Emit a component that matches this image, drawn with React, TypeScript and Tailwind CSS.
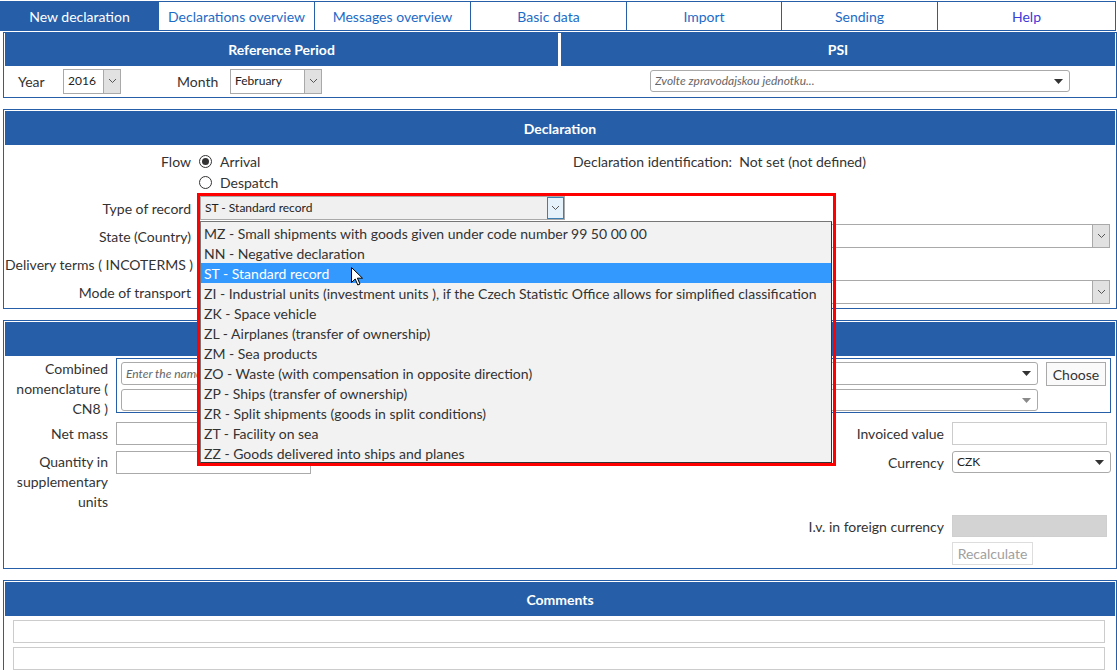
import type { ReactNode } from 'react'

const typeOptions = [
  'MZ - Small shipments with goods given under code number 99 50 00 00',
  'NN - Negative declaration',
  'ST - Standard record',
  'ZI - Industrial units (investment units ), if the Czech Statistic Office allows for simplified classification',
  'ZK - Space vehicle',
  'ZL - Airplanes (transfer of ownership)',
  'ZM - Sea products',
  'ZO - Waste (with compensation in opposite direction)',
  'ZP - Ships (transfer of ownership)',
  'ZR - Split shipments (goods in split conditions)',
  'ZT - Facility on sea',
  'ZZ - Goods delivered into ships and planes',
]

function Chevron() {
  return (
    <svg width="9" height="6" viewBox="0 0 9 6">
      <path d="M1 1l3.5 3.5L8 1" fill="none" stroke="#555" strokeWidth="1" />
    </svg>
  )
}

function Caret({ light }: { light?: boolean }) {
  return (
    <svg width="9" height="5" viewBox="0 0 9 5">
      <path d="M0 0h9L4.5 5z" fill={light ? '#8a8a8a' : '#333'} />
    </svg>
  )
}

// old-style native select with a grey button on the right
function ClassicSelect({ value, className }: { value?: string; className: string }) {
  return (
    <div className={`flex border border-[#a9a9a9] bg-white ${className}`}>
      <span className="flex flex-1 items-center truncate px-[4px] text-[12px] text-[#222]">{value}</span>
      <span className="flex w-[17px] items-center justify-center border-l border-[#a9a9a9] bg-[#e1e1e1]">
        <Chevron />
      </span>
    </div>
  )
}

// rounded combobox with a small black triangle
function Combo({ placeholder, value, className, light, clip }: { placeholder?: string; value?: string; className: string; light?: boolean; clip?: boolean }) {
  return (
    <div className={`flex items-center rounded-[3px] border border-[#aaaaaa] bg-white pl-[4px] pr-[6px] ${className}`}>
      {placeholder ? (
        <span className={`overflow-hidden whitespace-nowrap text-[12px] italic text-[#666] ${clip ? 'w-[74px]' : ''}`}>{placeholder}</span>
      ) : (
        <span className="text-[12px] text-[#222]">{value}</span>
      )}
      <span className="flex-1" />
      <Caret light={light} />
    </div>
  )
}

function Header({ children, className = '' }: { children?: ReactNode; className?: string }) {
  return (
    <div className={`flex items-center justify-center bg-[#265fa8] text-[14px] font-bold text-white ${className}`}>
      {children}
    </div>
  )
}

function Radio({ checked }: { checked?: boolean }) {
  return (
    <span className="flex h-[13px] w-[13px] items-center justify-center rounded-full border border-[#333] bg-white">
      {checked ? <span className="h-[7px] w-[7px] rounded-full bg-[#333]" /> : null}
    </span>
  )
}

function Cursor() {
  return (
    <svg width="13" height="20" viewBox="0 0 13 20" className="absolute left-[351px] top-[267px]">
      <path d="M0.5 0.5V15.5L4.2 12L6.8 18L9 17L6.4 11.2H11.5Z" fill="#fff" stroke="#000" strokeWidth="1" strokeLinejoin="round" />
    </svg>
  )
}

export default function App() {
  return (
    <div className="relative h-[670px] w-[1117px] overflow-hidden bg-white font-['Lato',sans-serif] text-[14px] text-[#333]">
      {/* Top menu */}
      <nav className="flex h-[31px] pt-[1px]">
        <div className="flex w-[159px] items-center justify-center bg-[#265fa8] text-white">New declaration</div>
        <div className="flex w-[156px] items-center justify-center border-y border-r border-[#265fa8] text-[#1d6bc6]">Declarations overview</div>
        <div className="flex w-[156px] items-center justify-center border-y border-r border-[#265fa8] text-[#1d6bc6]">Messages overview</div>
        <div className="flex w-[156px] items-center justify-center border-y border-r border-[#265fa8] text-[#1d6bc6]">Basic data</div>
        <div className="flex w-[155px] items-center justify-center border-y border-r border-[#265fa8] text-[#1d6bc6]">Import</div>
        <div className="flex w-[156px] items-center justify-center border-y border-r border-[#265fa8] text-[#1d6bc6]">Sending</div>
        <div className="flex w-[178px] items-center justify-center border-y border-r border-[#265fa8] text-[#3b3bd9]">Help</div>
      </nav>

      {/* Reference period + PSI */}
      <div className="ml-[3px] mt-[1px] w-[1114px] border border-[#265fa8] px-[1px] pb-[1px]">
        <div className="flex gap-[3px]">
          <Header className="h-[33px] w-[553px]">Reference Period</Header>
          <Header className="h-[33px] w-[554px]">PSI</Header>
        </div>
        <div className="flex h-[30px] gap-[3px]">
          <div className="flex w-[553px] items-center pl-[13px]">
            <span className="w-[45px]">Year</span>
            <ClassicSelect value="2016" className="h-[25px] w-[58px]" />
            <span className="ml-[56px] w-[53px]">Month</span>
            <ClassicSelect value="February" className="h-[25px] w-[92px]" />
          </div>
          <div className="flex w-[554px] items-center pl-[89px]">
            <Combo placeholder="Zvolte zpravodajskou jednotku..." className="h-[22px] w-[420px]" />
          </div>
        </div>
      </div>

      {/* Declaration */}
      <div className="ml-[3px] mt-[11px] w-[1114px] border border-[#265fa8] p-[1px]">
        <Header className="h-[34px]">Declaration</Header>
        <div className="pb-[3px] pt-[5px]">
          <div className="flex h-[22px] items-center">
            <span className="w-[186px] text-right">Flow</span>
            <div className="ml-[8px] flex w-[374px] items-center gap-[8px]">
              <Radio checked />
              <span>Arrival</span>
            </div>
            <span>Declaration identification:&nbsp; Not set (not defined)</span>
          </div>
          <div className="flex h-[20px] items-center">
            <div className="ml-[194px] flex items-center gap-[8px]">
              <Radio />
              <span>Despatch</span>
            </div>
          </div>
          <div className="mt-[4px] flex h-[24px] items-center">
            <span className="w-[186px] text-right">Type of record</span>
            <div className="ml-[9px] flex h-[24px] w-[365px] border border-[#a9a9a9] bg-[#f0f0f0]">
              <span className="flex flex-1 items-center px-[4px] text-[12px] text-[#222]">ST - Standard record</span>
              <span className="flex w-[17px] items-center justify-center border border-[#3c7fb1] bg-[#e5f1fb]">
                <Chevron />
              </span>
            </div>
          </div>
          <div className="mt-[4px] flex h-[24px] items-center">
            <span className="w-[186px] text-right">State (Country)</span>
            <ClassicSelect className="ml-[9px] h-[24px] w-[910px]" />
          </div>
          <div className="mt-[4px] flex h-[24px] items-center">
            <span className="w-[186px] whitespace-nowrap text-right">Delivery terms ( INCOTERMS )</span>
            <ClassicSelect className="ml-[9px] h-[24px] w-[400px]" />
          </div>
          <div className="mt-[4px] flex h-[24px] items-center">
            <span className="w-[186px] text-right">Mode of transport</span>
            <ClassicSelect className="ml-[9px] h-[24px] w-[910px]" />
          </div>
        </div>
      </div>

      {/* Goods item */}
      <div className="ml-[3px] mt-[11px] w-[1114px] border border-[#265fa8] p-[1px]">
        <Header className="h-[34px]">Goods item</Header>
        <div className="pb-[2px] pr-[4px] pt-[2px]">
          <div className="flex h-[55px]">
            <div className="w-[103px] pt-[1px] text-right leading-[20px]">
              Combined
              <br />
              nomenclature (
              <br />
              CN8 )
            </div>
            <div className="ml-[8px] flex h-[55px] w-[995px] gap-[8px] border border-[#265fa8] pl-[4px] pt-[3px]">
              <div className="flex w-[917px] flex-col gap-[4px]">
                <Combo placeholder="Enter the name or code of the goods" className="h-[23px] w-[917px]" clip />
                <Combo className="h-[22px] w-[917px]" light />
              </div>
              <div className="flex h-[24px] w-[60px] items-center justify-center border border-[#aaaaaa] bg-[#fafafa]">Choose</div>
            </div>
          </div>

          <div className="mt-[9px] flex justify-between">
            <div className="flex flex-col gap-[6px]">
              <div className="flex h-[23px] items-center">
                <span className="w-[103px] text-right">Net mass</span>
                <div className="ml-[8px] h-[23px] w-[195px] border border-[#aaaaaa]" />
              </div>
              <div className="flex items-start">
                <span className="w-[103px] pt-[1px] text-right leading-[20px]">
                  Quantity in
                  <br />
                  supplementary
                  <br />
                  units
                </span>
                <div className="ml-[8px] h-[23px] w-[195px] border border-[#aaaaaa]" />
              </div>
            </div>

            <div className="flex flex-col items-end">
              <div className="flex h-[23px] items-center">
                <span>Invoiced value</span>
                <div className="ml-[8px] w-[159px]">
                  <div className="h-[23px] w-[155px] border border-[#cccccc]" />
                </div>
              </div>
              <div className="mt-[6px] flex h-[22px] items-center">
                <span>Currency</span>
                <div className="ml-[8px] w-[159px]">
                  <Combo value="CZK" className="h-[22px] w-[159px]" />
                </div>
              </div>
              <div className="mt-[42px] flex h-[22px] items-center">
                <span>I.v. in foreign currency</span>
                <div className="ml-[8px] w-[159px]">
                  <div className="h-[22px] w-[155px] border border-[#cfcfcf] bg-[#d3d3d3]" />
                </div>
              </div>
              <div className="mt-[5px] w-[159px]">
                <div className="flex h-[23px] w-[81px] items-center justify-center border border-[#dddddd] text-[#a0a0a0]">Recalculate</div>
              </div>
            </div>
          </div>
        </div>
      </div>

      {/* Comments */}
      <div className="ml-[3px] mt-[11px] w-[1114px] border border-[#265fa8] p-[1px]">
        <Header className="h-[34px]">Comments</Header>
        <div className="flex flex-col gap-[4px] pl-[8px] pt-[4px]">
          <div className="h-[23px] w-[1092px] border border-[#cccccc]" />
          <div className="h-[23px] w-[1092px] border border-[#cccccc]" />
        </div>
      </div>

      {/* Opened "Type of record" list */}
      <div className="absolute left-[200px] top-[221px] flex h-[242px] w-[632px] flex-col border border-[#767676] border-r-[#333] border-b-[#333] bg-[#f2f2f2] py-[1px]">
        {typeOptions.map((opt) => (
          <div
            key={opt}
            className={`flex h-[20px] items-center whitespace-nowrap pl-[3px] ${opt.startsWith('ST') ? 'bg-[#3399ff] text-white' : 'text-[#333]'}`}
          >
            {opt}
          </div>
        ))}
      </div>
      <Cursor />

      {/* red highlight frame */}
      <div className="pointer-events-none absolute left-[197px] top-[193px] h-[273px] w-[639px] border-[3px] border-[#ff0000]" />
    </div>
  )
}
